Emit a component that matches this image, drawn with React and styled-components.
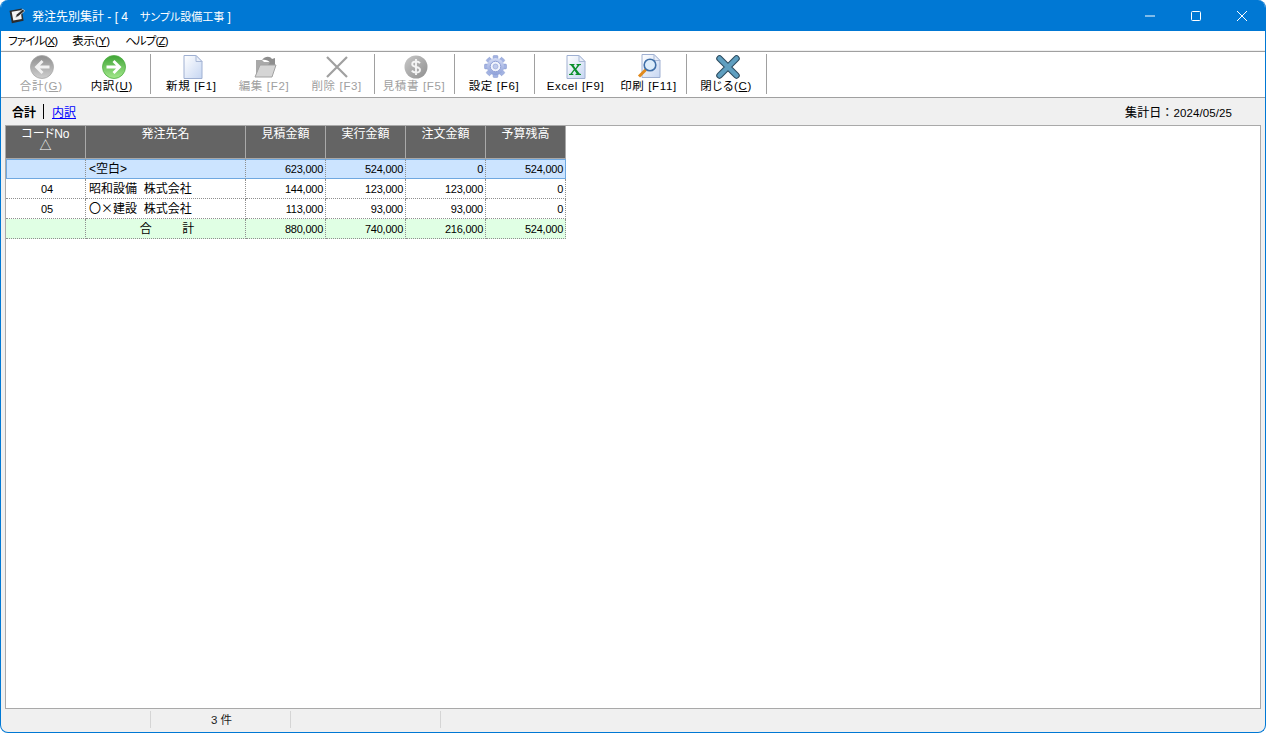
import React from "react";
import styled, { createGlobalStyle } from "styled-components";

const GlobalStyle = createGlobalStyle`
  html, body {
    margin: 0;
    padding: 0;
    background: #ffffff;
  }
  * {
    box-sizing: border-box;
  }
`;

const fontStack = `"Liberation Sans", "Noto Sans CJK JP", sans-serif`;

const Window = styled.div`
  width: 1266px;
  height: 733px;
  display: flex;
  flex-direction: column;
  overflow: hidden;
  background: #f0f0f0;
  border: 1px solid #0078d4;
  border-top: none;
  border-radius: 8px;
  font-family: ${fontStack};
  font-feature-settings: "palt";
  font-size: 12px;
  color: #000000;
`;

const TitleBar = styled.div`
  height: 31px;
  flex: none;
  margin: 0 -1px;
  padding-left: 9px;
  display: flex;
  align-items: center;
  background: #0078d4;
  color: #ffffff;
`;

const TitleText = styled.span`
  margin-left: 6px;
  font-size: 12px;
  white-space: pre;
`;

const TitleProject = styled.span`
  font-size: 11px;
`;

const WindowControls = styled.div`
  margin-left: auto;
  margin-right: 1px;
  display: flex;
  align-items: center;
`;

const ControlButton = styled.div`
  width: 46px;
  height: 31px;
  display: flex;
  align-items: center;
  justify-content: center;
`;

const MenuBar = styled.div`
  height: 20px;
  flex: none;
  padding: 0 0 1px 7px;
  display: flex;
  align-items: center;
  gap: 15px;
  background: #ffffff;
  border-bottom: 1px solid #f0f0f0;
`;

const MenuItem = styled.span`
  font-size: 11.5px;
  letter-spacing: ${(p) => (p.$tight ? "-0.85px" : "-0.1px")};
  white-space: nowrap;

  u {
    text-underline-offset: 1px;
  }
`;

const Toolbar = styled.div`
  height: 47px;
  flex: none;
  padding: 2px 0 3px 1px;
  display: flex;
  background: #ffffff;
  border-top: 1px solid #a0a0a0;
  border-bottom: 1px solid #a0a0a0;
`;

const ToolGroup = styled.div`
  width: ${(p) => p.$width}px;
  display: flex;
  justify-content: space-around;
  padding-right: 1px;
  border-right: 1px solid #a0a0a0;
`;

const ToolButton = styled.div`
  flex: 1 1 0;
  display: flex;
  flex-direction: column;
  align-items: center;
  justify-content: space-between;
  height: 39px;
  padding-left: ${(p) => Math.max(p.$nudge || 0, 0)}px;
  padding-right: ${(p) => Math.max(-(p.$nudge || 0), 0)}px;
  color: ${(p) => (p.$disabled ? "#a0a0a0" : "#000000")};
  font-size: 11.5px;
  line-height: 13px;
  letter-spacing: 0.65px;
  white-space: pre;
`;

const IconSlot = styled.div`
  width: 26px;
  height: 25px;
  margin-left: ${(p) => p.$shift || 0}px;
  display: flex;
  align-items: center;
  justify-content: center;
`;

const SubBar = styled.div`
  height: 27px;
  flex: none;
  padding: 0 33px 0 11px;
  display: flex;
  align-items: center;
`;

const ActiveTab = styled.span`
  font-weight: 700;
  font-size: 12px;
`;

const TabDivider = styled.span`
  width: 1px;
  height: 15px;
  margin: 0 8px 0 7px;
  background: #000000;
`;

const TabLink = styled.a`
  color: #0000ff;
  text-decoration: underline;
  font-size: 12px;
`;

const SummaryDate = styled.span`
  margin-left: auto;
  font-size: 11.5px;
  font-feature-settings: normal;
  letter-spacing: 0.1px;
  white-space: pre;
`;

const DateLabel = styled.span`
  font-size: 12px;
  -webkit-text-stroke: 0.1px #000000;
`;

const GridPanel = styled.div`
  flex: 1;
  margin: 0 4px;
  background: #ffffff;
  border: 1px solid #a9a9a9;
  min-height: 0;
`;

const Table = styled.table`
  border-collapse: separate;
  border-spacing: 0;
  table-layout: fixed;
  width: 560px;
`;

const HeadCell = styled.th`
  height: 33px;
  padding: 2px 0 0;
  vertical-align: top;
  background: #646464;
  color: #ffffff;
  font-weight: 400;
  font-size: 12px;
  line-height: 12px;
  text-align: center;
  border-right: 1px solid #a9a9a9;
  border-bottom: 1px solid #a9a9a9;
`;

const Cell = styled.td`
  height: 20px;
  padding: ${(p) => (p.$align === "right" ? "0 2px 0 0" : "0 0 0 3px")};
  text-align: ${(p) => p.$align || "left"};
  font-size: ${(p) => (p.$align === "right" || p.$code ? "11px" : "12px")};
  font-feature-settings: normal;
  letter-spacing: ${(p) => (p.$align === "right" ? "-0.25px" : "0")};
  line-height: 18px;
  white-space: pre;
  background: ${(p) => p.$bg};
  border-right: 1px dotted #8f8f8f;
  border-bottom: 1px dotted #8f8f8f;
  ${(p) => p.$selected && `
    border-top: 1px solid #6fa8e0;
    border-bottom: 1px solid #6fa8e0;
  `}
  ${(p) => p.$selected && p.$first && "border-left: 1px solid #6fa8e0;"}
  ${(p) => p.$selected && p.$last && "border-right: 1px solid #6fa8e0;"}
`;

const WideMark = styled.span`
  font-family: "Noto Sans CJK JP", sans-serif;
`;

const StatusBar = styled.div`
  height: 23px;
  flex: none;
  padding-top: 1px;
  display: flex;
`;

const StatusCell = styled.div`
  width: ${(p) => p.$width}px;
  height: 17px;
  margin-top: 1px;
  padding-left: 2px;
  font-size: 11.5px;
  line-height: 19px;
  text-align: center;
  color: #222222;
  border-right: 1px solid #d5d5d5;
`;

const BackIcon = () => (
  <svg width="24" height="24" viewBox="0 0 24 24">
    <defs>
      <linearGradient id="grayBall" x1="0" y1="0" x2="0" y2="1">
        <stop offset="0" stopColor="#8e8e8e" />
        <stop offset="1" stopColor="#cfcfcf" />
      </linearGradient>
    </defs>
    <circle cx="12" cy="12" r="11.5" fill="url(#grayBall)" stroke="#a8a8a8" strokeWidth="0.8" />
    <path d="M4.500 12l7-7 2 2-3.500 3.500h9.500v3H10l3.500 3.500-2 2z" fill="#f2f2f2" />
  </svg>
);

const ForwardIcon = () => (
  <svg width="24" height="24" viewBox="0 0 24 24">
    <defs>
      <linearGradient id="greenBall" x1="0" y1="0" x2="0" y2="1">
        <stop offset="0" stopColor="#3fa436" />
        <stop offset="1" stopColor="#a4e88c" />
      </linearGradient>
    </defs>
    <circle cx="12" cy="12" r="11.5" fill="url(#greenBall)" stroke="#4fae43" strokeWidth="0.8" />
    <path d="M19.500 12l-7-7-2 2 3.500 3.500H4.500v3H14l-3.500 3.500 2 2z" fill="#ffffff" />
  </svg>
);

const DocIcon = () => (
  <svg width="20" height="24" viewBox="0 0 20 24">
    <defs>
      <linearGradient id="docFill" x1="0" y1="0" x2="1" y2="1">
        <stop offset="0" stopColor="#ffffff" />
        <stop offset="1" stopColor="#c6d6f2" />
      </linearGradient>
    </defs>
    <path d="M1 .5h12l6 6v17H1z" fill="url(#docFill)" stroke="#9fb0d2" />
    <path d="M13 .5v6h6z" fill="#e8eef9" stroke="#a9b8d6" />
  </svg>
);

const FolderIcon = () => (
  <svg width="24" height="24" viewBox="0 0 24 24">
    <path d="M3 5h6l2 2h6v15H3z" fill="#a9a9a9" />
    <path d="M9 5c3-4 8-4 10-1l3-1v7h-7l2-2.500c-2-2-4-3-8-2.500z" fill="#8e8e8e" />
    <path d="M7 10h16l-4 12H2z" fill="#d5d5d5" stroke="#a2a2a2" />
  </svg>
);

const GrayCrossIcon = () => (
  <svg width="24" height="24" viewBox="0 0 24 24">
    <path d="M2 2l20 20M22 2L2 22" stroke="#a0a0a0" strokeWidth="2.2" fill="none" />
  </svg>
);

const CoinIcon = () => (
  <svg width="24" height="24" viewBox="0 0 24 24">
    <defs>
      <linearGradient id="coin" x1="0" y1="0" x2="1" y2="1">
        <stop offset="0" stopColor="#c8c8c8" />
        <stop offset="1" stopColor="#8f8f8f" />
      </linearGradient>
    </defs>
    <circle cx="12" cy="12" r="11.5" fill="url(#coin)" />
    <path
      d="M16 8.200c-.8-1.200-2.200-1.700-4-1.700-2.300 0-3.800 1.100-3.800 2.800 0 3.700 7.800 1.800 7.800 5.400 0 1.700-1.600 2.800-4 2.800-1.900 0-3.300-.6-4.200-1.900M12 4v16"
      fill="none"
      stroke="#f4f4f4"
      strokeWidth="1.900"
    />
  </svg>
);

const GearIcon = () => {
  const teeth = [0, 45, 90, 135, 180, 225, 270, 315];
  return (
    <svg width="23" height="23" viewBox="0 0 24 24">
      <defs>
        <linearGradient id="gear" x1="0" y1="0" x2="0" y2="1">
          <stop offset="0" stopColor="#d4dcf5" />
          <stop offset="1" stopColor="#8ea0d8" />
        </linearGradient>
      </defs>
      {teeth.map((a) => (
        <rect key={a} x="9.500" y="0.500" width="5" height="6" rx="1" fill="#a3b3e2" stroke="#7f92cc" strokeWidth="0.500" transform={`rotate(${a} 12 12)`} />
      ))}
      <circle cx="12" cy="12" r="9" fill="url(#gear)" />
      <circle cx="12" cy="12" r="5.500" fill="#f0f3fc" stroke="#8a9bd2" />
      <circle cx="12" cy="12" r="2.600" fill="#c0cbed" stroke="#8a9bd2" strokeWidth="0.600" />
    </svg>
  );
};

const ExcelIcon = () => (
  <svg width="20" height="24" viewBox="0 0 20 24">
    <path d="M1 .5h12l6 6v17H1z" fill="url(#docFill)" stroke="#9fb0d2" />
    <path d="M13 .5v6h6z" fill="#e8eef9" stroke="#a9b8d6" />
    <path d="M3.500 9h5v1l-1 .2 2 3 2-3-1-.2V9h4.500v1l-1.500.3-3.200 4 3.500 4.500 1.200.2v1h-5.500v-1l1.200-.2-2.200-3.300-2.400 3.300 1.300.2v1H3v-1l1.500-.3 3.400-4.400-3.100-4L3.500 10z" fill="#0a8f2c" />
  </svg>
);

const PreviewIcon = () => (
  <svg width="24" height="25" viewBox="0 0 24 25">
    <path d="M5 .5h12l6 6v17H5z" fill="url(#docFill)" stroke="#9fb0d2" />
    <path d="M17 .5v6h6z" fill="#e8eef9" stroke="#a9b8d6" />
    <path d="M9 15.500L2 22.500" stroke="#e08a1e" strokeWidth="3" />
    <circle cx="13" cy="11" r="5.800" fill="#dcecfb" stroke="#3f6fa8" strokeWidth="1.600" />
  </svg>
);

const CloseToolIcon = () => (
  <svg width="24" height="24" viewBox="0 0 24 24">
    <path d="M3.500 3.500l17 17M20.500 3.500l-17 17" stroke="#2c4a5e" strokeWidth="6.500" strokeLinecap="round" fill="none" />
    <path d="M3.500 3.500l17 17M20.500 3.500l-17 17" stroke="#5f9fc0" strokeWidth="4.500" strokeLinecap="round" fill="none" />
  </svg>
);

const AppIcon = () => (
  <svg width="17" height="17" viewBox="0 0 16 16">
    <path d="M.5 3.500L12 1.300l1.700 11.700L2.700 15.300z" fill="#2c2c2c" />
    <path d="M2.500 4.500l8.500-1.400 1 8.300-8 1.400z" fill="#f4f4f4" />
    <path d="M6 10l1-3 6-5 1.800 1.800-6 5z" fill="#2c2c2c" stroke="#f4f4f4" strokeWidth="0.600" />
  </svg>
);

const MinimizeGlyph = () => (
  <svg width="10" height="10" viewBox="0 0 10 10">
    <path d="M0 5h10" stroke="#ffffff" strokeWidth="1" />
  </svg>
);

const MaximizeGlyph = () => (
  <svg width="10" height="10" viewBox="0 0 10 10">
    <rect x="0.500" y="0.500" width="9" height="9" rx="1" fill="none" stroke="#ffffff" strokeWidth="1" />
  </svg>
);

const CloseGlyph = () => (
  <svg width="10" height="10" viewBox="0 0 10 10">
    <path d="M0 0l10 10M10 0L0 10" stroke="#ffffff" strokeWidth="1" />
  </svg>
);

const toolGroups = [
  {
    width: 149,
    buttons: [
      { label: <>合計(<u>G</u>)</>, icon: <BackIcon />, disabled: true, nudge: 4, shift: 1 },
      { label: <>内訳(<u>U</u>)</>, icon: <ForwardIcon />, nudge: -2, shift: 4 },
    ],
  },
  {
    width: 224,
    buttons: [
      { label: "新規 [F1]", icon: <DocIcon />, nudge: 4, shift: 4 },
      { label: "編集 [F2]", icon: <FolderIcon />, disabled: true, shift: 1 },
      { label: "削除 [F3]", icon: <GrayCrossIcon />, disabled: true },
    ],
  },
  { width: 80, buttons: [{ label: "見積書 [F5]", icon: <CoinIcon />, disabled: true, shift: 3 }] },
  { width: 80, buttons: [{ label: "設定 [F6]", icon: <GearIcon />, shift: 3 }] },
  {
    width: 152,
    buttons: [
      { label: "Excel [F9]", icon: <ExcelIcon />, nudge: 4 },
      { label: "印刷 [F11]", icon: <PreviewIcon /> },
    ],
  },
  { width: 80, buttons: [{ label: <>閉じる(<u>C</u>)</>, icon: <CloseToolIcon />, shift: 3 }] },
];

const columns = [
  { width: 80, title: <>コードNo<br />△</> },
  { width: 160, title: "発注先名" },
  { width: 80, title: "見積金額" },
  { width: 80, title: "実行金額" },
  { width: 80, title: "注文金額" },
  { width: 80, title: "予算残高" },
];

const rows = [
  { code: "", name: "<空白>", values: ["623,000", "524,000", "0", "524,000"], bg: "#cce4ff", selected: true },
  { code: "04", name: "昭和設備  株式会社", values: ["144,000", "123,000", "123,000", "0"], bg: "#ffffff" },
  { code: "05", name: <><WideMark>〇×</WideMark>建設  株式会社</>, values: ["113,000", "93,000", "93,000", "0"], bg: "#ffffff" },
  { code: "", name: "合　　  計", values: ["880,000", "740,000", "216,000", "524,000"], bg: "#e0ffe4", total: true },
];

const App = () => {
  return (
    <>
      <GlobalStyle />
      <Window>
        <TitleBar>
          <AppIcon />
          <TitleText>発注先別集計 - [ 4　<TitleProject>サンプル設備工事</TitleProject> ]</TitleText>
          <WindowControls>
            <ControlButton><MinimizeGlyph /></ControlButton>
            <ControlButton><MaximizeGlyph /></ControlButton>
            <ControlButton><CloseGlyph /></ControlButton>
          </WindowControls>
        </TitleBar>

        <MenuBar>
          <MenuItem $tight>ファイル(<u>X</u>)</MenuItem>
          <MenuItem>表示(<u>Y</u>)</MenuItem>
          <MenuItem $tight>ヘルプ(<u>Z</u>)</MenuItem>
        </MenuBar>

        <Toolbar>
          {toolGroups.map((group, i) => (
            <ToolGroup key={i} $width={group.width}>
              {group.buttons.map((btn, j) => (
                <ToolButton key={j} $disabled={btn.disabled} $nudge={btn.nudge}>
                  <IconSlot $shift={btn.shift}>{btn.icon}</IconSlot>
                  <span>{btn.label}</span>
                </ToolButton>
              ))}
            </ToolGroup>
          ))}
        </Toolbar>

        <SubBar>
          <ActiveTab>合計</ActiveTab>
          <TabDivider />
          <TabLink href="#">内訳</TabLink>
          <SummaryDate><DateLabel>集計日：</DateLabel>2024/05/25</SummaryDate>
        </SubBar>

        <GridPanel>
          <Table>
            <colgroup>
              {columns.map((col, i) => (
                <col key={i} style={{ width: col.width }} />
              ))}
            </colgroup>
            <thead>
              <tr>
                {columns.map((col, i) => (
                  <HeadCell key={i}>{col.title}</HeadCell>
                ))}
              </tr>
            </thead>
            <tbody>
              {rows.map((row, i) => (
                <tr key={i}>
                  <Cell $align="center" $code $bg={row.bg} $selected={row.selected} $first>{row.code}</Cell>
                  <Cell $align={row.total ? "center" : "left"} $bg={row.bg} $selected={row.selected}>{row.name}</Cell>
                  {row.values.map((v, j) => (
                    <Cell key={j} $align="right" $bg={row.bg} $selected={row.selected} $last={j === 3}>{v}</Cell>
                  ))}
                </tr>
              ))}
            </tbody>
          </Table>
        </GridPanel>

        <StatusBar>
          <StatusCell $width={150} />
          <StatusCell $width={140}>3 件</StatusCell>
          <StatusCell $width={150} />
        </StatusBar>
      </Window>
    </>
  );
};

export default App;
